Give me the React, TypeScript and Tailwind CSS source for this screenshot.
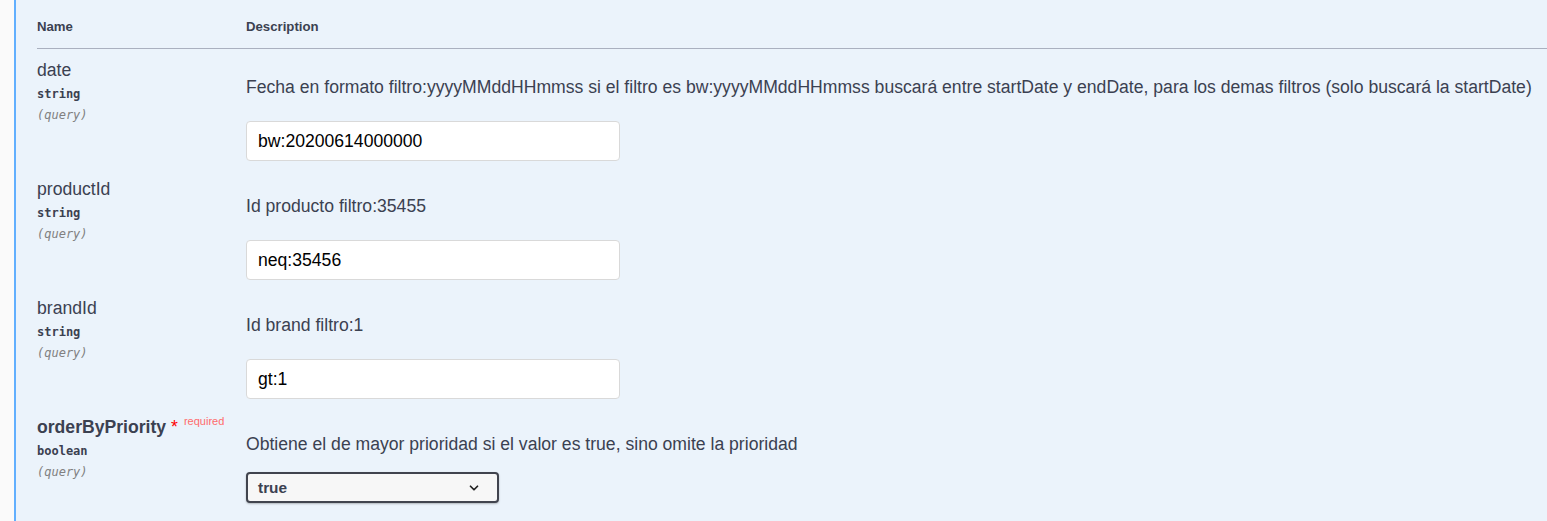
import { ChevronDown } from "lucide-react";

interface Param {
  name: string;
  type: string;
  description: string;
  value: string;
  required?: boolean;
  select?: boolean;
}

const params: Param[] = [
  {
    name: "date",
    type: "string",
    description:
      "Fecha en formato filtro:yyyyMMddHHmmss si el filtro es bw:yyyyMMddHHmmss buscará entre startDate y endDate, para los demas filtros (solo buscará la startDate)",
    value: "bw:20200614000000",
  },
  { name: "productId", type: "string", description: "Id producto filtro:35455", value: "neq:35456" },
  { name: "brandId", type: "string", description: "Id brand filtro:1", value: "gt:1" },
  {
    name: "orderByPriority",
    type: "boolean",
    description: "Obtiene el de mayor prioridad si el valor es true, sino omite la prioridad",
    value: "true",
    required: true,
    select: true,
  },
];

const sans = "font-['Liberation_Sans',Arial,sans-serif]";
const mono = "font-['DejaVu_Sans_Mono','Liberation_Mono',monospace]";

export default function App() {
  return (
    <div className={`flex w-[1547px] h-[521px] overflow-hidden bg-[#fafafa] ${sans}`}>
      <div className="w-[14px] shrink-0" />
      <div className="flex-1 bg-[#ebf3fb] border-l-2 border-[#61affe] text-[#3b4151]">
        {/* table head */}
        <div className="ml-[21px] flex h-[49px] pt-[17px] border-b border-[#aab0bf] text-[13.2px] font-bold leading-[20px]">
          <div className="w-[209px]">Name</div>
          <div>Description</div>
        </div>

        {params.map((p) => (
          <div key={p.name} className="ml-[21px] flex h-[119px]">
            <div className="w-[209px] shrink-0 pt-[11px]">
              <div className="flex items-start h-[20px]">
                <span className={`text-[17.6px] leading-[20px] ${p.required ? "font-bold" : ""}`}>
                  {p.name}
                </span>
                {p.required && (
                  <>
                    <span className="ml-[5px] text-[17.6px] leading-[20px] text-[#ff0000]">*</span>
                    <span className="ml-[6px] -mt-[3px] text-[11px] leading-[14px] text-[#ff6b6b]">required</span>
                  </>
                )}
              </div>
              <div className={`mt-[4px] text-[12px] leading-[20px] font-semibold ${mono}`}>{p.type}</div>
              <div className={`mt-px text-[12px] leading-[20px] italic text-[#808080] ${mono}`}>(query)</div>
            </div>

            <div className="pt-[28px] flex-1">
              <p className="text-[17.6px] leading-[20px] whitespace-nowrap">{p.description}</p>
              {p.select ? (
                <div className="mt-[18px] w-[253px] h-[31px] flex items-center justify-between pl-[10px] pr-[16px] bg-[#f7f7f7] border-2 border-[#41444e] rounded-[4px] shadow-[0_1px_2px_rgba(0,0,0,0.25)]">
                  <span className="text-[15.4px] font-bold text-[#3b4151]">{p.value}</span>
                  <ChevronDown className="w-[14px] h-[14px] text-[#222]" strokeWidth={3} />
                </div>
              ) : (
                <div className="mt-[24px] w-[374px] h-[40px] flex items-center pl-[11px] bg-white border border-[#d9d9d9] rounded-[4px]">
                  <span className="text-[17.6px] text-black">{p.value}</span>
                </div>
              )}
            </div>
          </div>
        ))}
      </div>
    </div>
  );
}
